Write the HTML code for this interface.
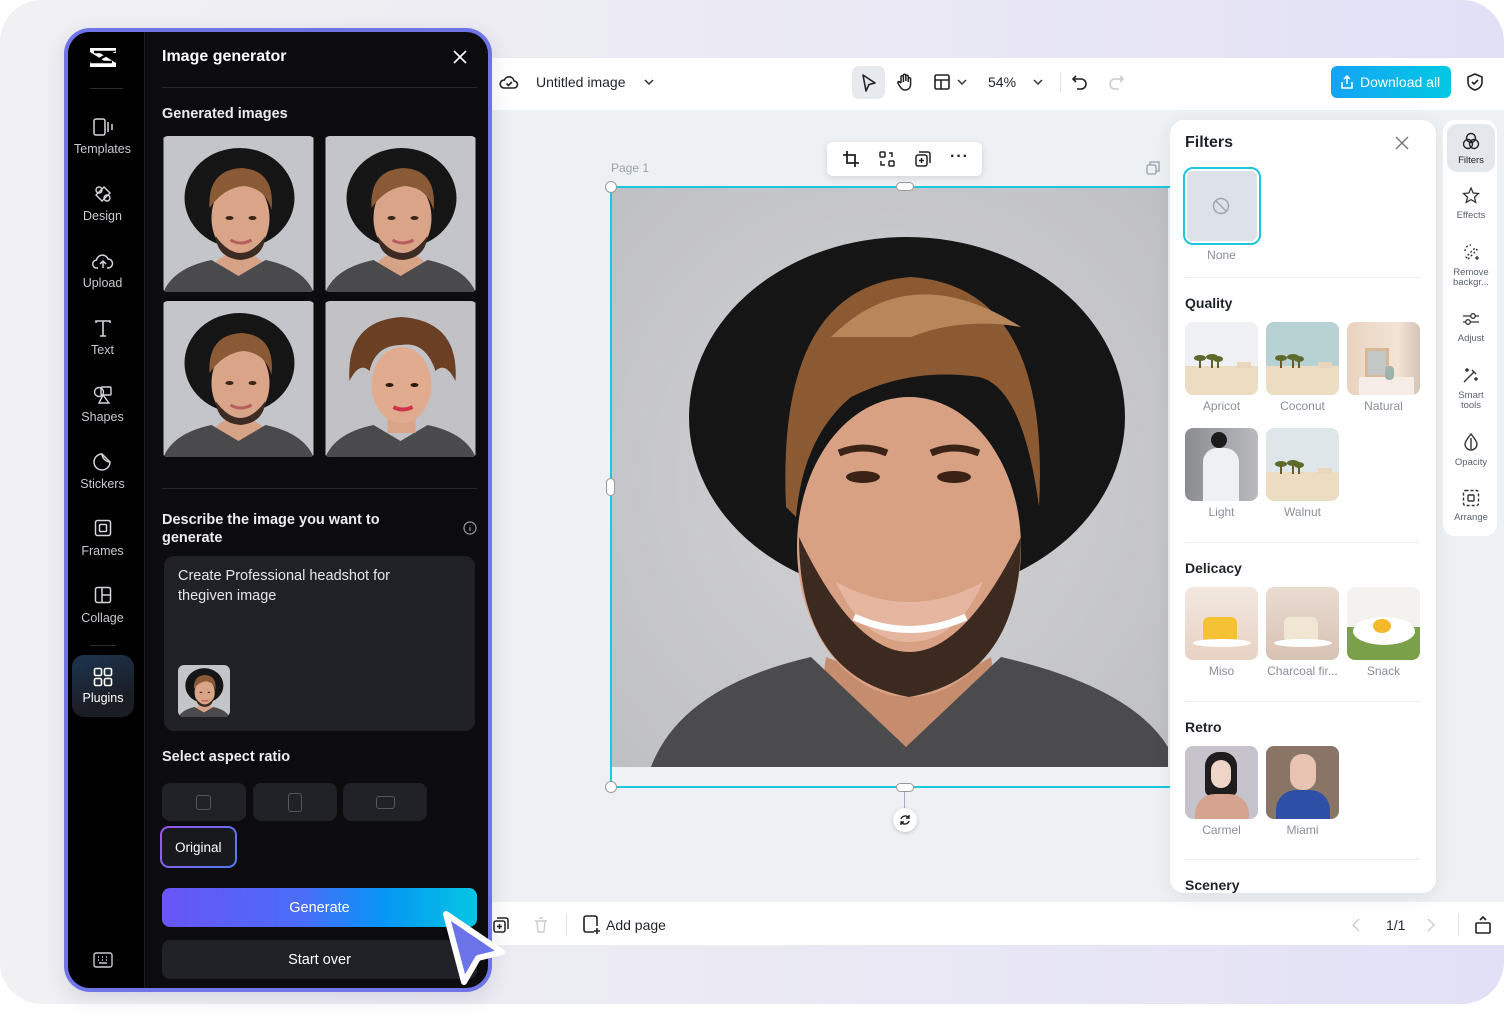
<!DOCTYPE html>
<html><head><meta charset="utf-8"><style>
*{box-sizing:border-box;margin:0;padding:0}
body{width:1504px;height:1020px;background:#fff;font-family:"Liberation Sans",sans-serif;position:relative;overflow:hidden}
.a{position:absolute}
.bg{left:0;top:0;width:1504px;height:1004px;border-radius:42px;background:linear-gradient(90deg,#f1f1f3 0%,#ebeaf3 50%,#e2e0f6 100%)}
.t{position:absolute;white-space:nowrap}
.dk{color:#fff}
.side{color:#c9cad0;font-size:12.5px;text-align:center;width:77px;left:0}
.lbl{color:#8a8f99;font-size:12px;text-align:center;width:73px}
.tile{position:absolute;width:73px;height:73px;border-radius:8px;overflow:hidden}
.rl{color:#5a606b;font-size:9.5px;text-align:center;width:54px;left:0;line-height:10px}
.sep{position:absolute;height:1px;background:#eceef1}
</style></head><body>
<div class="a bg"></div>
<svg width="0" height="0" style="position:absolute">
<defs>
<symbol id="man" viewBox="0 0 150 156">
<rect width="150" height="156" fill="#c4c5ca"/>
<ellipse cx="76" cy="62" rx="55" ry="50" fill="#151515"/>
<path d="M40 150 Q48 118 75 116 Q104 118 112 150Z" fill="#d6a386"/>
<path d="M0 156 Q10 132 48 124 L75 140 L102 124 Q140 132 150 156Z" fill="#4a4a4c"/>
<ellipse cx="77" cy="82" rx="29" ry="39" fill="#d9a488"/>
<path d="M46 72 Q44 34 78 32 Q112 34 108 74 Q102 52 80 50 Q60 52 46 72Z" fill="#8a5a36"/>
<path d="M52 100 Q77 134 102 100 Q100 122 77 124 Q54 122 52 100Z" fill="#3b2b22"/>
<ellipse cx="66" cy="82" rx="4" ry="2" fill="#3a2518"/><ellipse cx="89" cy="82" rx="4" ry="2" fill="#3a2518"/>
<path d="M67 104 Q77 110 88 104" stroke="#b85d5d" stroke-width="3" fill="none"/>
</symbol>
<symbol id="wom" viewBox="0 0 150 156">
<rect width="150" height="156" fill="#c2c2c6"/>
<path d="M0 156 Q10 132 48 124 L75 140 L102 124 Q140 132 150 156Z" fill="#4a4a4c"/>
<path d="M62 110 L62 132 L90 132 L90 110Z" fill="#d9a488"/>
<ellipse cx="76" cy="84" rx="30" ry="38" fill="#e0ab8e"/>
<path d="M24 80 Q20 20 76 16 Q134 20 130 80 Q120 60 110 70 Q100 40 76 44 Q50 44 44 70 Q34 60 24 80Z" fill="#6b3f24"/>
<ellipse cx="64" cy="84" rx="4" ry="2" fill="#2b1a10"/><ellipse cx="89" cy="84" rx="4" ry="2" fill="#2b1a10"/>
<path d="M68 106 Q77 111 87 106" stroke="#d2344a" stroke-width="4" fill="none"/>
</symbol>
<symbol id="desert" viewBox="0 0 73 73">
<rect width="73" height="73" fill="currentColor"/>
<rect y="44" width="73" height="29" fill="#ecdcc2"/>
<g fill="#6b5a2a"><rect x="14" y="36" width="2" height="10"/><rect x="26" y="36" width="2" height="10"/><rect x="32" y="36" width="2" height="10"/></g>
<g fill="#5d6a2c"><ellipse cx="15" cy="36" rx="6" ry="3"/><ellipse cx="27" cy="35" rx="6" ry="3"/><ellipse cx="33" cy="37" rx="5" ry="3"/></g>
<rect x="52" y="40" width="14" height="6" fill="#e9d6bd"/>
</symbol>
</defs></svg>

<div class="a" style="left:490px;top:58px;width:1014px;height:52px;background:#fff"></div>
<div class="a" style="left:490px;top:110px;width:1014px;height:792px;background:#edf1f4"></div>
<div class="a" style="left:490px;top:902px;width:1014px;height:43px;background:#fff"></div>

<svg class="a" style="left:499px;top:72px" width="20" height="20" viewBox="0 0 20 20" fill="none" stroke="#222" stroke-width="1.6"><path d="M5 16h10a3.5 3.5 0 0 0 0-7 5 5 0 0 0-9.6-1A4 4 0 0 0 5 16z"/><path d="M7.5 11.5l2 2 3.5-3.5"/></svg>
<div class="t" style="left:536px;top:74px;font-size:14px;color:#1f2329">Untitled image</div>
<svg class="a" style="left:643px;top:77px" width="12" height="10"><path d="M2 3l4 4 4-4" stroke="#333" stroke-width="1.5" fill="none"/></svg>
<div class="a" style="left:852px;top:66px;width:33px;height:33px;border-radius:7px;background:#e6eaee"></div>
<svg class="a" style="left:860px;top:73px" width="18" height="20"><path d="M3 2l12 8-6 1.5L6 18z" stroke="#222" stroke-width="1.6" fill="none" stroke-linejoin="round"/></svg>
<svg class="a" style="left:895px;top:72px" width="20" height="20" viewBox="0 0 20 20" fill="none" stroke="#222" stroke-width="1.5"><path d="M6 11V5a1.2 1.2 0 0 1 2.4 0v5M8.4 9V3.5a1.2 1.2 0 0 1 2.4 0V9M10.8 9V4.5a1.2 1.2 0 0 1 2.4 0V10M13.2 10V7a1.2 1.2 0 0 1 2.4 0v5c0 4-2.5 6-5.5 6S6 16 4 13l-1-2c-.6-1 .8-2 1.6-1.2L6 11"/></svg>
<svg class="a" style="left:933px;top:73px" width="18" height="18" fill="none" stroke="#222" stroke-width="1.6"><rect x="2" y="2" width="14" height="14" rx="1.5"/><path d="M2 7h14M8 7v9"/></svg>
<svg class="a" style="left:956px;top:77px" width="12" height="10"><path d="M2 3l4 4 4-4" stroke="#333" stroke-width="1.5" fill="none"/></svg>
<div class="t" style="left:988px;top:74px;font-size:14px;color:#1f2329">54%</div>
<svg class="a" style="left:1032px;top:77px" width="12" height="10"><path d="M2 3l4 4 4-4" stroke="#333" stroke-width="1.5" fill="none"/></svg>
<div class="a" style="left:1060px;top:72px;width:1px;height:20px;background:#e0e3e7"></div>
<svg class="a" style="left:1071px;top:73px" width="18" height="18" fill="none" stroke="#222" stroke-width="1.6"><path d="M5 3L2 6l3 3M2 6h8a5 5 0 0 1 0 10H6"/></svg>
<svg class="a" style="left:1107px;top:73px" width="18" height="18" fill="none" stroke="#c8ccd2" stroke-width="1.6"><path d="M13 3l3 3-3 3M16 6H8a5 5 0 0 0 0 10h4"/></svg>
<div class="a" style="left:1331px;top:66px;width:120px;height:32px;border-radius:6px;background:linear-gradient(90deg,#14a4f6,#02c8e2)"></div>
<svg class="a" style="left:1340px;top:74px" width="14" height="16" fill="none" stroke="#fff" stroke-width="1.5"><path d="M7 10V2M4 5l3-3 3 3M2 8v6h10V8"/></svg>
<div class="t" style="left:1360px;top:74px;font-size:14px;color:#fff">Download all</div>
<svg class="a" style="left:1465px;top:72px" width="20" height="20" fill="none" stroke="#222" stroke-width="1.6"><path d="M10 2l7 3v5c0 4-3 7-7 8-4-1-7-4-7-8V5z"/><path d="M7 10l2 2 4-4"/></svg>

<div class="t" style="left:611px;top:161px;font-size:12px;color:#9aa1aa">Page 1</div>
<svg class="a" style="left:1146px;top:161px" width="14" height="14" fill="none" stroke="#9aa1aa" stroke-width="1.3"><rect x="1" y="4" width="9" height="9" rx="1.5"/><path d="M4 4V1h9v9h-3"/></svg>
<div class="a" style="left:611px;top:187px;width:557px;height:600px;background:#f0f3f5"></div>
<svg class="a" style="left:611px;top:187px" width="557" height="580" viewBox="0 0 557 580">
<defs><radialGradient id="bgg" cx="0.5" cy="0.5" r="0.7"><stop offset="0" stop-color="#d3d3d6"/><stop offset="1" stop-color="#bfc0c4"/></radialGradient></defs>
<rect width="557" height="580" fill="url(#bgg)"/>
<ellipse cx="296" cy="230" rx="218" ry="180" fill="#151516"/>
<path d="M200 580 L215 470 Q290 500 300 500 Q330 500 380 470 L395 580Z" fill="#c68c6e"/>
<path d="M40 580 Q70 500 200 470 L295 560 L390 470 Q520 500 557 560 L557 580Z" fill="#4b4b4d"/>
<ellipse cx="298" cy="360" rx="112" ry="150" fill="#d9a184"/>
<path d="M175 320 Q165 100 300 90 Q440 100 428 320 Q412 200 368 190 Q300 180 240 210 Q192 250 185 330Z" fill="#8c5a32"/>
<path d="M220 150 Q300 70 410 140 Q350 130 300 150Z" fill="#b7875b"/>
<path d="M188 350 Q298 580 410 350 Q410 490 298 510 Q188 490 188 350Z" fill="#3c2a20"/>
<path d="M225 395 Q298 435 372 395 Q345 455 298 455 Q252 455 225 395Z" fill="#e6b6a0"/>
<path d="M243 430 Q298 455 355 430" stroke="#fff" stroke-width="7" fill="none"/>
<ellipse cx="252" cy="290" rx="17" ry="6" fill="#3a2316"/><ellipse cx="343" cy="290" rx="17" ry="6" fill="#3a2316"/>
<path d="M228 266 Q252 256 276 266M320 266 Q343 256 368 266" stroke="#3a2316" stroke-width="7" fill="none"/>
</svg>
<div class="a" style="left:611px;top:186px;width:560px;height:2px;background:#1fc6dc"></div>
<div class="a" style="left:611px;top:786px;width:560px;height:2px;background:#1fc6dc"></div>
<div class="a" style="left:610px;top:186px;width:2px;height:602px;background:#1fc6dc"></div>
<div class="a" style="left:605px;top:181px;width:12px;height:12px;border-radius:50%;background:#fff;border:1px solid #999"></div>
<div class="a" style="left:605px;top:781px;width:12px;height:12px;border-radius:50%;background:#fff;border:1px solid #999"></div>
<div class="a" style="left:896px;top:182px;width:18px;height:9px;border-radius:5px;background:#fff;border:1px solid #999"></div>
<div class="a" style="left:896px;top:783px;width:18px;height:9px;border-radius:5px;background:#fff;border:1px solid #999"></div>
<div class="a" style="left:606px;top:478px;width:9px;height:18px;border-radius:5px;background:#fff;border:1px solid #999"></div>
<div class="a" style="left:904px;top:792px;width:1px;height:16px;background:#aab"></div>
<div class="a" style="left:893px;top:808px;width:24px;height:24px;border-radius:50%;background:#fff;box-shadow:0 1px 4px rgba(0,0,0,.2)"></div>
<svg class="a" style="left:898px;top:813px" width="14" height="14" fill="none" stroke="#222" stroke-width="1.4"><path d="M11 5a4.5 4.5 0 0 0-8 1M3 9a4.5 4.5 0 0 0 8-1M11 2v3H8M3 12V9h3"/></svg>

<div class="a" style="left:827px;top:142px;width:155px;height:34px;background:#fff;border-radius:6px;box-shadow:0 2px 8px rgba(0,0,0,.12)"></div>
<svg class="a" style="left:842px;top:150px" width="18" height="18" fill="none" stroke="#222" stroke-width="1.8"><path d="M5 1v12h12M1 5h12v12"/></svg>
<svg class="a" style="left:878px;top:150px" width="18" height="18" fill="none" stroke="#222" stroke-width="1.5"><rect x="2" y="2" width="5" height="5" rx="1"/><rect x="11" y="11" width="5" height="5" rx="1"/><path d="M11 3h3v4M7 15H3v-4"/></svg>
<svg class="a" style="left:914px;top:150px" width="18" height="18" fill="none" stroke="#222" stroke-width="1.5"><rect x="2" y="5" width="11" height="11" rx="2"/><path d="M5 2h9a2 2 0 0 1 2 2v9M7.5 8v5M5 10.5h5"/></svg>
<div class="t" style="left:950px;top:148px;font-size:16px;font-weight:bold;color:#222;letter-spacing:1px">···</div>

<div class="a" style="left:1170px;top:120px;width:266px;height:773px;background:#fff;border-radius:14px;box-shadow:0 4px 18px rgba(0,0,0,.07)"></div>
<div class="t" style="left:1185px;top:134px;font-size:16px;font-weight:bold;color:#1f2329">Filters</div>
<svg class="a" style="left:1395px;top:136px" width="14" height="14" stroke="#777" stroke-width="1.4"><path d="M1 1l12 12M13 1L1 13"/></svg>
<div class="a" style="left:1183px;top:167px;width:78px;height:78px;border-radius:10px;border:2px solid #1fc6dc;background:#dce2e7;box-shadow:inset 0 0 0 2px #fff"></div>
<svg class="a" style="left:1212px;top:197px" width="18" height="18" fill="none" stroke="#a0a8b0" stroke-width="1.5"><circle cx="9" cy="9" r="7.5"/><path d="M4 4l10 10"/></svg>
<div class="t lbl" style="left:1185px;top:248px">None</div>
<div class="sep" style="left:1185px;top:277px;width:235px"></div>
<div class="t" style="left:1185px;top:295px;font-size:14px;font-weight:bold;color:#1f2329">Quality</div>
<svg class="tile" style="left:1185px;top:322px;color:#eef0f3"><use href="#desert"/></svg>
<svg class="tile" style="left:1266px;top:322px;color:#b8d1d3"><use href="#desert"/></svg>
<div class="tile" style="left:1347px;top:322px;background:linear-gradient(90deg,#e9d3c0,#f3e4d5 70%,#d5c4b6)"><div class="a" style="left:18px;top:26px;width:24px;height:30px;border:3px solid #d8b894;background:#c3c8c6"></div><div class="a" style="left:12px;top:55px;width:55px;height:18px;background:#f6eee6"></div><div class="a" style="left:38px;top:44px;width:9px;height:14px;border-radius:4px;background:#9fb3ad"></div></div>
<div class="t lbl" style="left:1185px;top:399px">Apricot</div>
<div class="t lbl" style="left:1266px;top:399px">Coconut</div>
<div class="t lbl" style="left:1347px;top:399px">Natural</div>
<div class="tile" style="left:1185px;top:428px;background:linear-gradient(90deg,#8a8c90,#b9bbbe)"><div class="a" style="left:26px;top:4px;width:16px;height:16px;border-radius:50%;background:#1b1b1b"></div><div class="a" style="left:18px;top:20px;width:36px;height:53px;border-radius:14px 14px 0 0;background:#eef0f2"></div></div>
<svg class="tile" style="left:1266px;top:428px;color:#dfe6ea"><use href="#desert"/></svg>
<div class="t lbl" style="left:1185px;top:505px">Light</div>
<div class="t lbl" style="left:1266px;top:505px">Walnut</div>
<div class="sep" style="left:1185px;top:542px;width:235px"></div>
<div class="t" style="left:1185px;top:560px;font-size:14px;font-weight:bold;color:#1f2329">Delicacy</div>
<div class="tile" style="left:1185px;top:587px;background:linear-gradient(#f2e8e0,#e8d2c4)"><div class="a" style="left:18px;top:30px;width:34px;height:26px;border-radius:6px;background:#f5c234"></div><div class="a" style="left:8px;top:52px;width:58px;height:8px;border-radius:50%;background:#fff"></div></div>
<div class="tile" style="left:1266px;top:587px;background:linear-gradient(#eadbd2,#d8c2b3)"><div class="a" style="left:18px;top:30px;width:34px;height:26px;border-radius:6px;background:#f1e5d4"></div><div class="a" style="left:8px;top:52px;width:58px;height:8px;border-radius:50%;background:#fff"></div></div>
<div class="tile" style="left:1347px;top:587px;background:linear-gradient(#f3f2ef 55%,#7ba04a 55%)"><div class="a" style="left:6px;top:30px;width:62px;height:28px;border-radius:50%;background:#fff"></div><div class="a" style="left:26px;top:32px;width:18px;height:14px;border-radius:50%;background:#f5b82a"></div></div>
<div class="t lbl" style="left:1185px;top:664px">Miso</div>
<div class="t lbl" style="left:1266px;top:664px">Charcoal fir...</div>
<div class="t lbl" style="left:1347px;top:664px">Snack</div>
<div class="sep" style="left:1185px;top:701px;width:235px"></div>
<div class="t" style="left:1185px;top:719px;font-size:14px;font-weight:bold;color:#1f2329">Retro</div>
<div class="tile" style="left:1185px;top:746px;background:#c6c3cc"><div class="a" style="left:20px;top:6px;width:32px;height:44px;border-radius:14px 14px 6px 6px;background:#1f1c1e"></div><div class="a" style="left:26px;top:14px;width:20px;height:28px;border-radius:10px;background:#efd4c8"></div><div class="a" style="left:10px;top:48px;width:54px;height:30px;border-radius:20px 20px 0 0;background:#d5a38f"></div></div>
<div class="tile" style="left:1266px;top:746px;background:#8a7465"><div class="a" style="left:24px;top:8px;width:26px;height:36px;border-radius:12px;background:#e7c4b1"></div><div class="a" style="left:10px;top:44px;width:54px;height:34px;border-radius:20px 20px 0 0;background:#2d4fa6"></div></div>
<div class="t lbl" style="left:1185px;top:823px">Carmel</div>
<div class="t lbl" style="left:1266px;top:823px">Miami</div>
<div class="sep" style="left:1185px;top:859px;width:235px"></div>
<div class="t" style="left:1185px;top:877px;font-size:14px;font-weight:bold;color:#1f2329">Scenery</div>

<div class="a" style="left:1443px;top:120px;width:54px;height:416px;background:#fff;border-radius:12px"></div>
<div class="a" style="left:1447px;top:124px;width:48px;height:48px;background:#e4e8ec;border-radius:10px"></div>
<div class="a" style="left:1444px;top:0;width:54px;height:540px">
<svg class="a" style="left:18px;top:132px" width="18" height="18" fill="none" stroke="#222" stroke-width="1.4"><circle cx="9" cy="6" r="4.5"/><circle cx="6" cy="12" r="4.5"/><circle cx="12" cy="12" r="4.5"/></svg>
<div class="t rl" style="top:156px;color:#222">Filters</div>
<svg class="a" style="left:18px;top:187px" width="18" height="18" fill="none" stroke="#333" stroke-width="1.3"><path d="M9 1l2.2 5 5.3.5-4 3.6 1.2 5.3L9 12.6 4.3 15.4l1.2-5.3-4-3.6 5.3-.5z"/></svg>
<div class="t rl" style="top:211px">Effects</div>
<svg class="a" style="left:18px;top:243px" width="18" height="18" fill="none" stroke="#333" stroke-width="1.3"><path d="M6 16l9-9-2-2-9 9zM3 8a6 6 0 0 1 6-6" stroke-dasharray="2 2"/><path d="M15 13v4M13 15h4"/></svg>
<div class="t rl" style="top:268px">Remove<br>backgr...</div>
<svg class="a" style="left:18px;top:310px" width="18" height="18" fill="none" stroke="#333" stroke-width="1.3"><path d="M1 6h16M1 12h16"/><circle cx="11" cy="6" r="2.3" fill="#fff"/><circle cx="6" cy="12" r="2.3" fill="#fff"/></svg>
<div class="t rl" style="top:334px">Adjust</div>
<svg class="a" style="left:18px;top:366px" width="18" height="18" fill="none" stroke="#333" stroke-width="1.4"><path d="M2 16L12 6M10 4l4 4"/><path d="M5 2v4M3 4h4M14 11v4M12 13h4"/></svg>
<div class="t rl" style="top:391px">Smart<br>tools</div>
<svg class="a" style="left:19px;top:433px" width="16" height="18" fill="none" stroke="#333" stroke-width="1.4"><path d="M8 1C5 5 2 8 2 11a6 6 0 0 0 12 0c0-3-3-6-6-10z"/><path d="M8 5v11" /></svg>
<div class="t rl" style="top:458px">Opacity</div>
<svg class="a" style="left:18px;top:489px" width="18" height="18" fill="none" stroke="#333" stroke-width="1.4"><rect x="1.5" y="1.5" width="15" height="15" rx="2" stroke-dasharray="3 2"/><rect x="6" y="6" width="6" height="6" rx="1"/></svg>
<div class="t rl" style="top:513px">Arrange</div>
</div>

<svg class="a" style="left:492px;top:916px" width="18" height="18" fill="none" stroke="#222" stroke-width="1.5"><rect x="2" y="5" width="11" height="11" rx="2"/><path d="M5 2h9a2 2 0 0 1 2 2v9M7.5 8v5M5 10.5h5"/></svg>
<svg class="a" style="left:533px;top:916px" width="16" height="18" fill="none" stroke="#c8ccd2" stroke-width="1.4"><path d="M2 5h12M4 5l1 11h6l1-11M6 2h4"/></svg>
<div class="a" style="left:566px;top:914px;width:1px;height:22px;background:#e0e3e7"></div>
<svg class="a" style="left:582px;top:915px" width="20" height="20" fill="none" stroke="#222" stroke-width="1.6"><path d="M12 17H4a2 2 0 0 1-2-2V3a2 2 0 0 1 2-2h9a2 2 0 0 1 2 2v8M15 13v6M12 16h6"/></svg>
<div class="t" style="left:606px;top:917px;font-size:14px;color:#1f2329">Add page</div>
<svg class="a" style="left:1351px;top:917px" width="10" height="16" fill="none" stroke="#c8ccd2" stroke-width="1.4"><path d="M8 2L2 8l6 6"/></svg>
<div class="t" style="left:1386px;top:917px;font-size:14px;color:#1f2329">1/1</div>
<svg class="a" style="left:1426px;top:917px" width="10" height="16" fill="none" stroke="#c8ccd2" stroke-width="1.4"><path d="M2 2l6 6-6 6"/></svg>
<div class="a" style="left:1458px;top:914px;width:1px;height:22px;background:#e0e3e7"></div>
<svg class="a" style="left:1474px;top:915px" width="18" height="20" fill="none" stroke="#222" stroke-width="1.6"><rect x="2" y="8" width="14" height="10" rx="1"/><path d="M6 5l3-3 3 3"/></svg>

<div class="a" style="left:64px;top:28px;width:428px;height:964px;border-radius:26px;background:#6f74e6;box-shadow:0 6px 20px rgba(60,60,120,.15)"></div>
<div class="a" style="left:68px;top:32px;width:420px;height:956px;border-radius:22px;background:#0c0c0f;overflow:hidden">
 <div class="a" style="left:0;top:0;width:77px;height:956px;background:#000;border-right:1px solid #1d1e22"></div>
</div>
<div class="a" style="left:64px;top:0;width:77px;height:1000px">
<svg class="a" style="left:24px;top:45px" width="30" height="24" viewBox="0 0 30 24"><path d="M2 3h26v5H12l16 10v4H2v-5h16L2 7z" fill="#fff"/><path d="M6 7h18L6 17h18" stroke="#000" stroke-width="2.5" fill="none"/></svg>
<div class="a" style="left:26px;top:88px;width:33px;height:1px;background:#2b2c31"></div>
<svg class="a" style="left:29px;top:118px" width="22" height="18" fill="none" stroke="#d5d6dc" stroke-width="1.5"><rect x="1" y="1" width="11" height="16" rx="2"/><path d="M15 4v10M19 6v6"/></svg>
<div class="t side" style="top:142px">Templates</div>
<svg class="a" style="left:30px;top:185px" width="18" height="18" fill="none" stroke="#d5d6dc" stroke-width="1.4"><circle cx="5" cy="5" r="3"/><circle cx="13" cy="13" r="3"/><path d="M10 2l6 6-8 8-6-6z"/></svg>
<div class="t side" style="top:209px">Design</div>
<svg class="a" style="left:28px;top:252px" width="22" height="18" fill="none" stroke="#d5d6dc" stroke-width="1.5"><path d="M6 16H5a4 4 0 0 1-.5-8 6 6 0 0 1 11.5-1 4.5 4.5 0 0 1 0 9h-1M11 16V9M8 12l3-3 3 3"/></svg>
<div class="t side" style="top:276px">Upload</div>
<svg class="a" style="left:30px;top:319px" width="18" height="18" fill="none" stroke="#d5d6dc" stroke-width="1.6"><path d="M2 4V2h14v2M9 2v15M6 17h6"/></svg>
<div class="t side" style="top:343px">Text</div>
<svg class="a" style="left:29px;top:385px" width="20" height="20" fill="none" stroke="#d5d6dc" stroke-width="1.4"><circle cx="6" cy="7" r="4.5"/><rect x="8" y="2" width="10" height="8" rx="1"/><path d="M10 10l-4 8h10z"/></svg>
<div class="t side" style="top:410px">Shapes</div>
<svg class="a" style="left:29px;top:452px" width="19" height="19" fill="none" stroke="#d5d6dc" stroke-width="1.5"><path d="M17 10A8 8 0 1 1 9 2c0 4 4 8 8 8zM9 2l8 8"/></svg>
<div class="t side" style="top:477px">Stickers</div>
<svg class="a" style="left:30px;top:519px" width="18" height="18" fill="none" stroke="#d5d6dc" stroke-width="1.5"><rect x="1.5" y="1.5" width="15" height="15" rx="2"/><rect x="5.5" y="5.5" width="7" height="7" rx="1"/></svg>
<div class="t side" style="top:544px">Frames</div>
<svg class="a" style="left:30px;top:586px" width="18" height="18" fill="none" stroke="#d5d6dc" stroke-width="1.5"><rect x="1.5" y="1.5" width="15" height="15" rx="2"/><path d="M8 1.5v15M8 9h8.5"/></svg>
<div class="t side" style="top:611px">Collage</div>
<div class="a" style="left:26px;top:645px;width:26px;height:1px;background:#2b2c31"></div>
<div class="a" style="left:8px;top:655px;width:62px;height:62px;border-radius:12px;background:linear-gradient(160deg,#1c3550,#1b1d25 70%)"></div>
<svg class="a" style="left:29px;top:667px" width="20" height="20" fill="none" stroke="#fff" stroke-width="1.6"><rect x="1.5" y="1.5" width="7" height="7" rx="1.5"/><rect x="11.5" y="1.5" width="7" height="7" rx="1.5"/><rect x="1.5" y="11.5" width="7" height="7" rx="1.5"/><rect x="11.5" y="11.5" width="7" height="7" rx="1.5"/></svg>
<div class="t side" style="top:691px;color:#fff;left:4px;width:70px">Plugins</div>
<svg class="a" style="left:29px;top:952px" width="20" height="16" fill="none" stroke="#c9cad0" stroke-width="1.4"><rect x="1" y="1" width="18" height="14" rx="2"/><path d="M5 5h1M9 5h1M13 5h1M5 8h1M9 8h1M13 8h1M6 11h8"/></svg>
</div>

<div class="t dk" style="left:162px;top:48px;font-size:16px;font-weight:bold">Image generator</div>
<svg class="a" style="left:453px;top:50px" width="14" height="14" stroke="#fff" stroke-width="1.6"><path d="M1 1l12 12M13 1L1 13"/></svg>
<div class="a" style="left:162px;top:87px;width:315px;height:1px;background:#26272c"></div>
<div class="t dk" style="left:162px;top:106px;font-size:14.5px;font-weight:bold;color:#ececef">Generated images</div>
<svg class="a" style="left:162px;top:136px;border-radius:6px" width="153" height="156"><use href="#man"/></svg>
<svg class="a" style="left:324px;top:136px;border-radius:6px" width="153" height="156"><use href="#man"/></svg>
<svg class="a" style="left:162px;top:301px;border-radius:6px" width="153" height="156"><use href="#man"/></svg>
<svg class="a" style="left:324px;top:301px;border-radius:6px" width="153" height="156"><use href="#wom"/></svg>
<div class="a" style="left:162px;top:488px;width:315px;height:1px;background:#26272c"></div>
<div class="t dk" style="left:162px;top:511px;font-size:14.5px;font-weight:bold;line-height:18px;color:#ececef">Describe the image you want to<br>generate</div>
<svg class="a" style="left:463px;top:521px" width="14" height="14" fill="none" stroke="#9a9ba2" stroke-width="1.2"><circle cx="7" cy="7" r="6"/><path d="M7 6v4M7 4v.5"/></svg>
<div class="a" style="left:164px;top:556px;width:311px;height:175px;border-radius:10px;background:#202127"></div>
<div class="t" style="left:178px;top:567px;font-size:14.5px;line-height:19.5px;color:#e6e6ea">Create Professional headshot for<br>thegiven image</div>
<svg class="a" style="left:178px;top:665px;border-radius:6px" width="52" height="52" viewBox="0 0 150 156" preserveAspectRatio="xMidYMid slice"><use href="#man"/></svg>
<div class="t dk" style="left:162px;top:749px;font-size:14.5px;font-weight:bold;color:#ececef">Select aspect ratio</div>
<div class="a" style="left:162px;top:783px;width:84px;height:38px;border-radius:8px;background:#202127"></div>
<div class="a" style="left:253px;top:783px;width:84px;height:38px;border-radius:8px;background:#202127"></div>
<div class="a" style="left:343px;top:783px;width:84px;height:38px;border-radius:8px;background:#202127"></div>
<div class="a" style="left:196px;top:795px;width:15px;height:15px;border:1.5px solid #55575f;border-radius:3px"></div>
<div class="a" style="left:288px;top:793px;width:14px;height:19px;border:1.5px solid #55575f;border-radius:3px"></div>
<div class="a" style="left:376px;top:796px;width:19px;height:13px;border:1.5px solid #55575f;border-radius:3px"></div>
<div class="a" style="left:160px;top:826px;width:77px;height:42px;border-radius:9px;background:linear-gradient(135deg,#9b55f0,#4f7cf2);padding:2px"><div style="width:100%;height:100%;border-radius:7px;background:#18191e"></div></div>
<div class="t dk" style="left:175px;top:840px;font-size:13.5px">Original</div>
<div class="a" style="left:162px;top:888px;width:315px;height:39px;border-radius:8px;background:linear-gradient(90deg,#6a55f6 0%,#4a6df8 45%,#0795f5 70%,#05c6e2 100%)"></div>
<div class="t dk" style="left:162px;top:900px;width:315px;text-align:center;font-size:14.5px">Generate</div>
<div class="a" style="left:162px;top:940px;width:315px;height:39px;border-radius:8px;background:#202127"></div>
<div class="t dk" style="left:162px;top:952px;width:315px;text-align:center;font-size:14.5px">Start over</div>

<svg class="a" style="left:438px;top:906px" width="72" height="84" viewBox="0 0 72 84"><path d="M8 8 L64 46 L40 52 L26 76 Z" fill="#6b73e8" stroke="#fff" stroke-width="6" stroke-linejoin="round"/></svg>
</body></html>
